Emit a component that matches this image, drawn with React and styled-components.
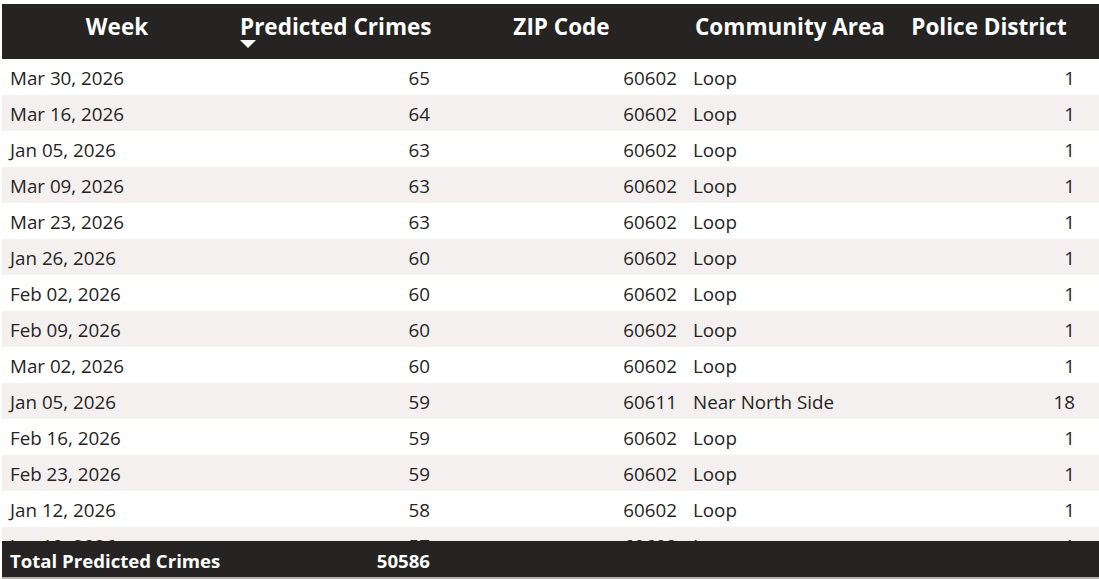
import React from 'react';
import styled, { createGlobalStyle } from 'styled-components';

const rows = [
  ['Mar 30, 2026', 65, '60602', 'Loop', 1],
  ['Mar 16, 2026', 64, '60602', 'Loop', 1],
  ['Jan 05, 2026', 63, '60602', 'Loop', 1],
  ['Mar 09, 2026', 63, '60602', 'Loop', 1],
  ['Mar 23, 2026', 63, '60602', 'Loop', 1],
  ['Jan 26, 2026', 60, '60602', 'Loop', 1],
  ['Feb 02, 2026', 60, '60602', 'Loop', 1],
  ['Feb 09, 2026', 60, '60602', 'Loop', 1],
  ['Mar 02, 2026', 60, '60602', 'Loop', 1],
  ['Jan 05, 2026', 59, '60611', 'Near North Side', 18],
  ['Feb 16, 2026', 59, '60602', 'Loop', 1],
  ['Feb 23, 2026', 59, '60602', 'Loop', 1],
  ['Jan 12, 2026', 58, '60602', 'Loop', 1],
  ['Jan 19, 2026', 57, '60602', 'Loop', 1],
  ['Feb 02, 2026', 57, '60602', 'Loop', 1],
];

const columns = '230px 206px 247px 210px 188px 1fr';

const GlobalStyle = createGlobalStyle`
  body {
    margin: 0;
    background: #ffffff;
    font-family: 'Open Sans', 'Noto Sans', sans-serif;
  }
`;

const TableVisual = styled('div')`
  margin: 4px 0 0 2px;
  width: 1097px;
  border-bottom: 2px solid #b3b0ad;
`;

const HeaderRow = styled('div')`
  display: grid;
  grid-template-columns: ${columns};
  height: 55px;
  background: #252423;
  color: #ffffff;
`;

const HeaderCell = styled('div')`
  position: relative;
  padding: 8px 8px 0;
  text-align: center;
  font-size: 22.5px;
  font-weight: 700;
  line-height: 30px;
  white-space: nowrap;
`;

const HeaderLabel = styled('span')`
  position: relative;
  display: inline-block;
`;

const SortArrow = styled('span')`
  position: absolute;
  left: 0;
  top: 28px;
  width: 0;
  height: 0;
  border-left: 8px solid transparent;
  border-right: 8px solid transparent;
  border-top: 8px solid #ffffff;
`;

const Body = styled('div')`
  height: 482px;
  overflow: hidden;
`;

const Row = styled('div')`
  display: grid;
  grid-template-columns: ${columns};
  height: 36px;
  align-items: center;
  background: ${(p) => (p.$shaded ? '#f3f0ef' : '#ffffff')};
  color: #252423;
  font-size: 18.8px;
`;

const Cell = styled('div')`
  padding: 2px 8px 0;
  text-align: ${(p) => (p.$right ? 'right' : 'left')};
  white-space: nowrap;
  overflow: hidden;
`;

const TotalRow = styled('div')`
  display: grid;
  grid-template-columns: ${columns};
  height: 36px;
  align-items: center;
  background: #252423;
  color: #ffffff;
  font-size: 18.6px;
  font-weight: 700;
`;

const App = () => (
  <>
    <GlobalStyle />
    <TableVisual>
      <HeaderRow>
        <HeaderCell><HeaderLabel>Week</HeaderLabel></HeaderCell>
        <HeaderCell>
          <HeaderLabel>
            Predicted Crimes
            <SortArrow />
          </HeaderLabel>
        </HeaderCell>
        <HeaderCell><HeaderLabel>ZIP Code</HeaderLabel></HeaderCell>
        <HeaderCell><HeaderLabel>Community Area</HeaderLabel></HeaderCell>
        <HeaderCell><HeaderLabel>Police District</HeaderLabel></HeaderCell>
        <div />
      </HeaderRow>
      <Body>
        {rows.map((r, i) => (
          <Row key={`row-${i}`} $shaded={i % 2 === 1}>
            <Cell>{r[0]}</Cell>
            <Cell $right>{r[1]}</Cell>
            <Cell $right>{r[2]}</Cell>
            <Cell>{r[3]}</Cell>
            <Cell $right>{r[4]}</Cell>
            <div />
          </Row>
        ))}
      </Body>
      <TotalRow>
        <Cell>Total Predicted Crimes</Cell>
        <Cell $right>50586</Cell>
        <Cell />
        <Cell />
        <Cell />
        <div />
      </TotalRow>
    </TableVisual>
  </>
);

export default App;
